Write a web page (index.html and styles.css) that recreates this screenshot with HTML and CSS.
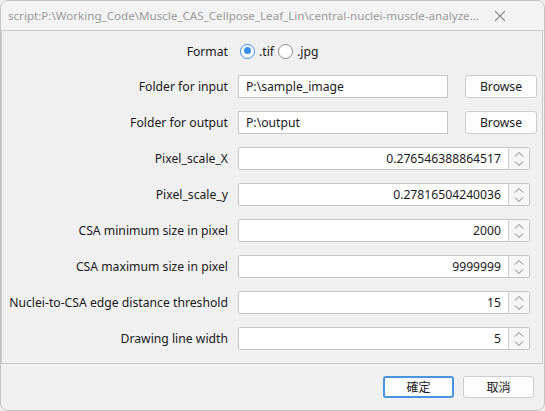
FILE: index.html
```html
<!DOCTYPE html>
<html>
<head>
<meta charset="utf-8">
<link rel="stylesheet" href="styles.css">
</head>
<body>
<div class="window">
  <div class="titlebar">
    <span class="title">script:P:\Working_Code\Muscle_CAS_Cellpose_Leaf_Lin\central-nuclei-muscle-analyze...</span>
    <svg class="close" width="12" height="12" viewBox="0 0 12 12"><path d="M1 1L11 11M11 1L1 11" stroke="#8a8a8a" stroke-width="1.1" fill="none"/></svg>
  </div>
  <div class="frame">
    <div class="row row-format">
      <div class="label">Format</div>
      <div class="radios">
        <span class="radio checked"></span><span class="rlabel">.tif</span>
        <span class="radio"></span><span class="rlabel">.jpg</span>
      </div>
    </div>
    <div class="row row-first">
      <div class="label">Folder for input</div>
      <div class="text-field">P:\sample_image</div>
      <div class="btn browse">Browse</div>
    </div>
    <div class="row">
      <div class="label">Folder for output</div>
      <div class="text-field">P:\output</div>
      <div class="btn browse">Browse</div>
    </div>
    <div class="row">
      <div class="label">Pixel_scale_X</div>
      <div class="spin"><div class="val">0.276546388864517</div><div class="arrows"><svg width="12" height="18" viewBox="0 0 12 18"><path d="M2 6.5L6 2.5L10 6.5M2 11.5L6 15.5L10 11.5" stroke="#7a7a7a" stroke-width="1" fill="none"/></svg></div></div>
    </div>
    <div class="row">
      <div class="label">Pixel_scale_y</div>
      <div class="spin"><div class="val">0.27816504240036</div><div class="arrows"><svg width="12" height="18" viewBox="0 0 12 18"><path d="M2 6.5L6 2.5L10 6.5M2 11.5L6 15.5L10 11.5" stroke="#7a7a7a" stroke-width="1" fill="none"/></svg></div></div>
    </div>
    <div class="row">
      <div class="label">CSA minimum size in pixel</div>
      <div class="spin"><div class="val">2000</div><div class="arrows"><svg width="12" height="18" viewBox="0 0 12 18"><path d="M2 6.5L6 2.5L10 6.5M2 11.5L6 15.5L10 11.5" stroke="#7a7a7a" stroke-width="1" fill="none"/></svg></div></div>
    </div>
    <div class="row">
      <div class="label">CSA maximum size in pixel</div>
      <div class="spin"><div class="val">9999999</div><div class="arrows"><svg width="12" height="18" viewBox="0 0 12 18"><path d="M2 6.5L6 2.5L10 6.5M2 11.5L6 15.5L10 11.5" stroke="#7a7a7a" stroke-width="1" fill="none"/></svg></div></div>
    </div>
    <div class="row">
      <div class="label">Nuclei-to-CSA edge distance threshold</div>
      <div class="spin"><div class="val">15</div><div class="arrows"><svg width="12" height="18" viewBox="0 0 12 18"><path d="M2 6.5L6 2.5L10 6.5M2 11.5L6 15.5L10 11.5" stroke="#7a7a7a" stroke-width="1" fill="none"/></svg></div></div>
    </div>
    <div class="row">
      <div class="label">Drawing line width</div>
      <div class="spin"><div class="val">5</div><div class="arrows"><svg width="12" height="18" viewBox="0 0 12 18"><path d="M2 6.5L6 2.5L10 6.5M2 11.5L6 15.5L10 11.5" stroke="#7a7a7a" stroke-width="1" fill="none"/></svg></div></div>
    </div>
  </div>
  <div class="footer">
    <div class="btn dlg default">確定</div>
    <div class="btn dlg">取消</div>
  </div>
</div>
</body>
</html>
```

FILE: styles.css
```css
* { box-sizing: border-box; }
html, body { margin: 0; padding: 0; background: #f0f0f0; }
body {
  font-family: "Noto Sans", "Noto Sans CJK TC", sans-serif;
  font-size: 12.2px;
  color: #1a1a1a;
}
.window {
  width: 545px;
  height: 411px;
  border: 1px solid #c4c4c4;
  border-radius: 8px;
  background: #f0f0f0;
  overflow: hidden;
  display: flex;
  flex-direction: column;
}
.titlebar {
  height: 29px;
  flex: none;
  display: flex;
  align-items: center;
  padding: 0 0 0 7px;
  background: #f3f3f3;
}
.title { color: #9a9a9a; font-size: 11.6px; white-space: nowrap; flex: 1; }
.close { display: block; margin-right: 38px; }
.frame {
  margin-right: 1px;
  border: 1px solid #cacaca;
  padding-bottom: 13px;
  display: flex;
  flex-direction: column;
}
.row {
  display: flex;
  align-items: center;
  height: 23px;
  margin-top: 13px;
}
.row-format { height: 24px; margin-top: 8px; }
.row-first { margin-top: 12px; }
.label {
  width: 226px;
  text-align: right;
  margin-right: 10px;
  white-space: nowrap;
}
.radios { display: flex; align-items: center; }
.radio {
  width: 15px;
  height: 15px;
  border-radius: 50%;
  border: 1px solid #8c8c8c;
  background: #fff;
  margin-left: 2px;
  margin-right: 4px;
  position: relative;
}
.radio.checked {
  border: 1.5px solid #3a8ee6;
}
.radio.checked::after {
  content: "";
  position: absolute;
  left: 2.5px; top: 2.5px;
  width: 7px; height: 7px;
  border-radius: 50%;
  background: #3a8ee6;
}
.rlabel { margin-right: 2px; }
.text-field {
  width: 210px;
  height: 23px;
  background: #fff;
  border: 1px solid #c6c6c6;
  padding-left: 7px;
  line-height: 21px;
}
.btn {
  background: #fdfdfd;
  border: 1px solid #cdcdcd;
  border-radius: 3px;
  text-align: center;
}
.browse {
  width: 72px;
  height: 23px;
  line-height: 21px;
  margin-left: 17px;
}
.spin {
  width: 292px;
  height: 23px;
  display: flex;
  background: #fff;
  border: 1px solid #c6c6c6;
  border-radius: 2px;
}
.val {
  flex: 1;
  text-align: right;
  padding-right: 7px;
  line-height: 21px;
}
.arrows {
  width: 21px;
  border-left: 1px solid #d0d0d0;
  background: #f7f7f7;
  display: flex;
  align-items: center;
  justify-content: center;
}
.arrows svg { display: block; }
.footer {
  display: flex;
  justify-content: flex-end;
  gap: 9px;
  padding: 12px 10px 0 0;
}
.dlg {
  width: 71px;
  height: 22px;
  line-height: 20px;
  font-family: "Noto Sans CJK TC", sans-serif;
  font-size: 12px;
}
.dlg.default { border: 2px solid #4a94de; line-height: 18px; }
```
